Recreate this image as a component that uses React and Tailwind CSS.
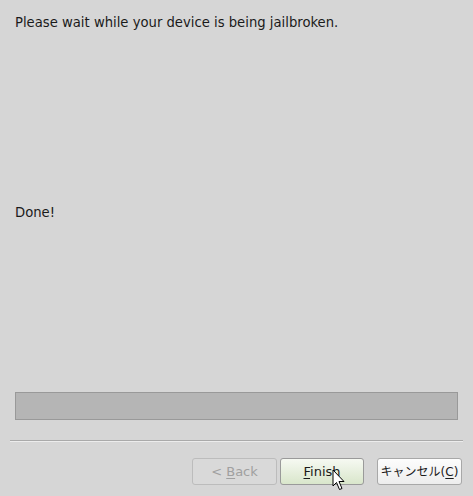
const Cursor = () => (
    <svg className="absolute left-[51px] top-[10px]" width="14" height="22" viewBox="0 0 14 22">
        <path d="M1 1 L1 17 L4.5 13.5 L7.5 20.5 L10 19.5 L7 12.5 L12 12.5 Z" fill="#fff" stroke="#000" strokeWidth="1" strokeLinejoin="miter" />
    </svg>
);

const App = () => {
    return (
        <div className="w-[473px] h-[496px] bg-[#d6d6d6] flex flex-col font-['DejaVu_Sans',sans-serif] text-[13.2px] text-[#1a1a1a] overflow-hidden">
            <div className="px-[15px] pt-[14px] leading-[18px]">
                Please wait while your device is being jailbroken.
            </div>

            <div className="px-[15px] mt-[172px] leading-[18px]">Done!</div>

            {/* progress bar */}
            <div className="mx-[15px] mt-[170px] h-[28px] bg-[#b5b5b5] border border-[#999999]"></div>

            {/* separator */}
            <div className="mx-[10px] mt-[20px] h-[2px] border-t border-[#aaaaaa] border-b-[#ececec] border-b"></div>

            {/* buttons */}
            <div className="flex justify-end gap-[3px] pr-[11px] mt-[16px]">
                <button className="w-[85px] h-[27px] rounded-[3px] border border-[#bcbcbc] bg-[#d9d9d9] text-[#a0a0a0] text-[13px]">
                    &lt; <span className="underline underline-offset-2">B</span>ack
                </button>
                <button className="relative w-[84px] h-[27px] rounded-[3px] border border-[#9a9a9a] bg-gradient-to-b from-[#f6f9f2] to-[#d9e6cb] text-[#1a1a1a] text-[13px]">
                    <span className="underline underline-offset-2">F</span>inish
                    <Cursor />
                </button>
                <button className="ml-[10px] w-[85px] h-[27px] rounded-[3px] border border-[#a8a8a8] bg-gradient-to-b from-[#fdfdfd] to-[#ededed] text-[#1a1a1a] text-[12px] font-['DejaVu_Sans','Noto_Sans_CJK_JP',sans-serif]">
                    キャンセル(<span className="underline underline-offset-2">C</span>)
                </button>
            </div>
        </div>
    );
};

export default App;
